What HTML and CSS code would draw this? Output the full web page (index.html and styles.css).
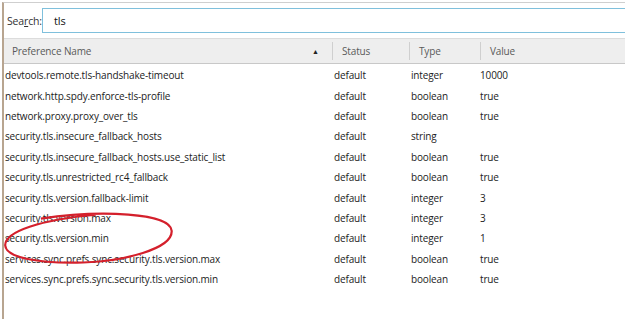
FILE: index.html
```html
<!DOCTYPE html>
<html>
<head>
<meta charset="utf-8">
<link rel="stylesheet" href="styles.css">
</head>
<body>
<div class="frame">
  <div class="searchbar">
    <label class="search-label">Sea<u>r</u>ch:</label>
    <div class="search-input">tls</div>
  </div>
  <div class="header">
    <div class="hcell c-name">Preference Name<span class="sort">&#9650;</span></div>
    <div class="hcell c-status">Status</div>
    <div class="hcell c-type">Type</div>
    <div class="hcell c-value">Value</div>
  </div>
  <div class="rows">
    <div class="row"><span class="c-name">devtools.remote.tls-handshake-timeout</span><span class="c-status">default</span><span class="c-type">integer</span><span class="c-value">10000</span></div>
    <div class="row"><span class="c-name">network.http.spdy.enforce-tls-profile</span><span class="c-status">default</span><span class="c-type">boolean</span><span class="c-value">true</span></div>
    <div class="row"><span class="c-name">network.proxy.proxy_over_tls</span><span class="c-status">default</span><span class="c-type">boolean</span><span class="c-value">true</span></div>
    <div class="row"><span class="c-name">security.tls.insecure_fallback_hosts</span><span class="c-status">default</span><span class="c-type">string</span><span class="c-value"></span></div>
    <div class="row"><span class="c-name">security.tls.insecure_fallback_hosts.use_static_list</span><span class="c-status">default</span><span class="c-type">boolean</span><span class="c-value">true</span></div>
    <div class="row"><span class="c-name">security.tls.unrestricted_rc4_fallback</span><span class="c-status">default</span><span class="c-type">boolean</span><span class="c-value">true</span></div>
    <div class="row"><span class="c-name">security.tls.version.fallback-limit</span><span class="c-status">default</span><span class="c-type">integer</span><span class="c-value">3</span></div>
    <div class="row"><span class="c-name">security.tls.version.max</span><span class="c-status">default</span><span class="c-type">integer</span><span class="c-value">3</span></div>
    <div class="row"><span class="c-name">security.tls.version.min</span><span class="c-status">default</span><span class="c-type">integer</span><span class="c-value">1</span></div>
    <div class="row"><span class="c-name">services.sync.prefs.sync.security.tls.version.max</span><span class="c-status">default</span><span class="c-type">boolean</span><span class="c-value">true</span></div>
    <div class="row"><span class="c-name">services.sync.prefs.sync.security.tls.version.min</span><span class="c-status">default</span><span class="c-type">boolean</span><span class="c-value">true</span></div>
  </div>
  <svg class="circle" width="180" height="60" viewBox="0 0 180 60">
    <path d="M40 7 C 100 1, 170 8, 170 26 C 170 44, 120 54, 80 53 C 35 52, 3 44, 3 32 C 3 18, 40 8, 95 6" fill="none" stroke="#d4202c" stroke-width="2.2"/>
  </svg>
</div>
</body>
</html>
```
FILE: styles.css
```css
html, body {
  margin: 0;
  padding: 0;
  background: #ffffff;
}
body {
  font-family: "Open Sans", "Noto Sans", sans-serif;
  font-size: 10px;
  letter-spacing: -0.15px;
  color: #222222;
  width: 627px;
  height: 319px;
  overflow: hidden;
}
.frame {
  position: relative;
  margin-left: 2px;
  margin-top: 2px;
  width: 623px;
  height: 317px;
  border-left: 2px solid #b8a590;
  border-top: 1px solid #cfcfcf;
  box-sizing: border-box;
}
.searchbar {
  display: flex;
  align-items: center;
  height: 25px;
  margin-top: 5px;
}
.search-label {
  width: 38px;
  padding-left: 3px;
  color: #333333;
  box-sizing: border-box;
  font-size: 10.5px;
}
.search-label u {
  text-decoration-thickness: 1px;
}
.search-input {
  flex: 1;
  height: 25px;
  border: 1px solid #7fc0dc;
  border-right: none;
  box-sizing: border-box;
  display: flex;
  align-items: center;
  padding-left: 11px;
  color: #111111;
  font-size: 11px;
}
.header {
  display: flex;
  align-items: center;
  height: 26px;
  margin-top: 5px;
  background: #eeeeee;
  border-top: 1px solid #dcdcdc;
  border-bottom: 1px solid #c8c8c8;
  box-sizing: border-box;
  color: #5a5a5a;
}
.hcell {
  height: 100%;
  display: flex;
  align-items: center;
  box-sizing: border-box;
}
.header .c-name {
  width: 328px;
  padding-left: 8px;
  position: relative;
}
.sort {
  position: absolute;
  left: 308px;
  top: 8px;
  font-size: 7px;
  color: #222222;
}
.header .c-status,
.header .c-type,
.header .c-value {
  border-left: 1px solid #cfcfcf;
  height: 18px;
}
.header .c-status {
  width: 77px;
  padding-left: 9px;
}
.header .c-type {
  width: 71px;
  padding-left: 9px;
}
.header .c-value {
  flex: 1;
  padding-left: 9px;
}
.rows {
  padding-top: 1px;
}
.row {
  display: flex;
  align-items: center;
  height: 20.4px;
  white-space: nowrap;
}
.row .c-name {
  width: 330px;
  padding-left: 1px;
  box-sizing: border-box;
}
.row .c-status {
  width: 77px;
}
.row .c-type {
  width: 69px;
}
.row .c-value {
  flex: 1;
}
.circle {
  position: absolute;
  left: -2px;
  top: 206px;
  transform: rotate(-3deg);
}
```
